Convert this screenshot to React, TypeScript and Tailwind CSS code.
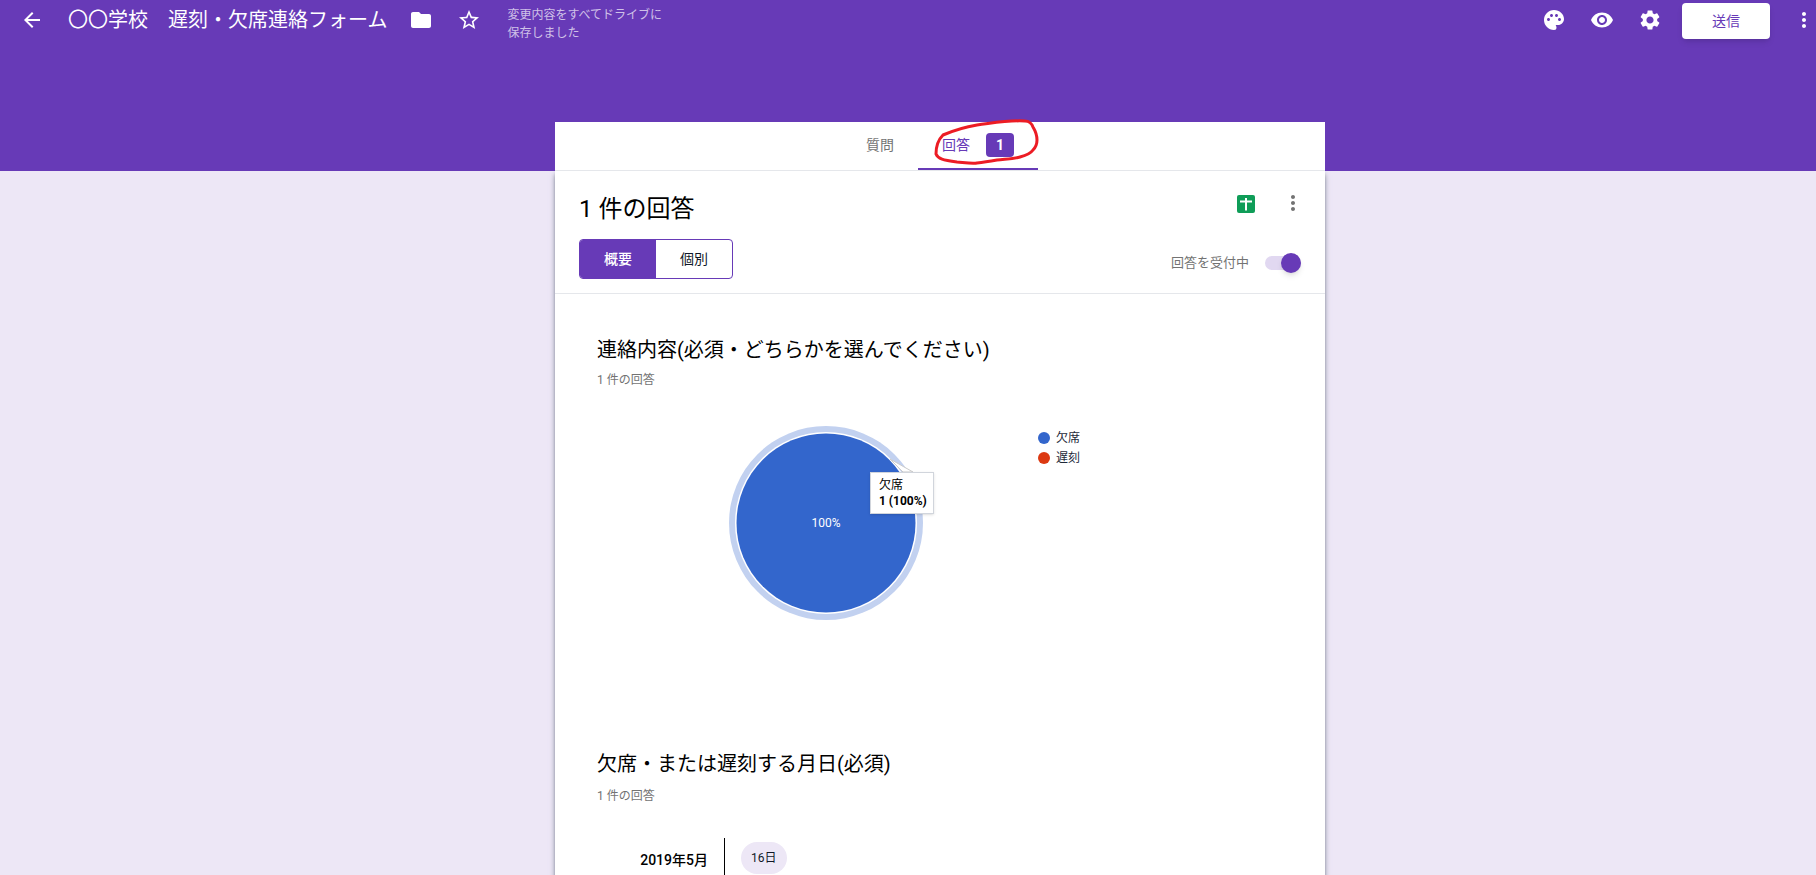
import { MdArrowBack, MdFolder, MdMoreVert, MdPalette, MdRemoveRedEye, MdSettings, MdStarBorder } from "react-icons/md"

const font = { fontFamily: '"Roboto", "Noto Sans CJK JP", sans-serif' }

function TopBar() {
    return (
        <div className="flex h-10 items-center pl-5 text-white">
            <MdArrowBack size={24} />
            <h1 className="ml-6 text-xl whitespace-nowrap">〇〇学校　遅刻・欠席連絡フォーム</h1>
            <MdFolder size={24} className="ml-5.5" />
            <MdStarBorder size={24} className="ml-6" />
            <p className="ml-6.5 w-40 pt-2 text-xs leading-4.5 text-white/70">変更内容をすべてドライブに保存しました</p>
            <div className="ml-auto flex items-center gap-6">
                <MdPalette size={24} />
                <MdRemoveRedEye size={24} />
                <MdSettings size={24} />
            </div>
            <button className="mt-0.5 ml-5 h-9 w-22 rounded bg-white text-sm text-[#673ab7] shadow-md">送信</button>
            <MdMoreVert size={24} className="ml-5.5" />
        </div>
    )
}

function Tabs() {
    return (
        <div className="relative mb-px ml-[555px] flex h-12 w-[770px] justify-center bg-white text-sm">
            <div className="flex items-center border-b-2 border-transparent px-6 text-neutral-500">質問</div>
            <div className="flex items-center border-b-2 border-[#673ab7] px-6 text-[#673ab7]">
                回答
                <span className="ml-4 flex h-6 w-7 items-center justify-center rounded bg-[#673ab7] font-bold text-white">1</span>
            </div>
            <svg viewBox="0 0 770 48" className="absolute inset-0 h-full w-full overflow-visible" fill="none">
                <path
                    d="M470 -1 C455 -2 445 0 422 3 C410 5 402 7 388 13 C383 18 381 26 381 32 C383 37 388 38 402 40 C412 41 418 42 422 41 C430 40 436 39 442 38 C450 37 458 37 465 35 C472 33 476 31 478 28 C481 25 482 22 482 18 C482 13 481 10 478 5 C477 2 474 -1 470 -1"
                    stroke="#ec1c24"
                    strokeWidth="3"
                    strokeLinecap="round"
                />
            </svg>
        </div>
    )
}

function SheetIcon() {
    return (
        <svg width="18" height="18" viewBox="0 0 18 18">
            <rect width="18" height="18" rx="2" fill="#0f9d58" />
            <path d="M8 3h2v2.500h5V7.500h-5V15.500H8V7.500H3V5.500h5z" fill="#fff" />
        </svg>
    )
}

function SummaryHeader() {
    return (
        <div className="border-b border-gray-200 px-6 pt-5 pb-3.5">
            <div className="flex justify-between">
                <h2 className="mt-0.5 text-2xl text-black">1 件の回答</h2>
                <div className="flex gap-6.5 text-neutral-500">
                    <div className="pt-1"><SheetIcon /></div>
                    <MdMoreVert size={24} className="-mr-1" />
                </div>
            </div>
            <div className="mt-3.5 flex justify-between">
                <div className="flex h-10 overflow-hidden rounded border border-[#673ab7] text-sm">
                    <div className="flex items-center bg-[#673ab7] px-6 font-medium text-white">概要</div>
                    <div className="flex items-center px-6 text-gray-900">個別</div>
                </div>
                <div className="flex items-center gap-4 pt-2">
                    <span className="text-[13px] text-neutral-500">回答を受付中</span>
                    <div className="relative h-3.5 w-9 rounded-full bg-[#e1d8f1]">
                        <div className="absolute top-1/2 right-0 h-5 w-5 -translate-y-1/2 rounded-full bg-[#673ab7] shadow-md" />
                    </div>
                </div>
            </div>
        </div>
    )
}

function PieChart() {
    return (
        <div className="relative ml-32 h-52 w-52">
            <svg viewBox="0 0 208 208" className="h-52 w-52">
                <circle cx="103" cy="103" r="97" fill="#c2d1f0" />
                <circle cx="103" cy="103" r="91" fill="#fff" />
                <circle cx="103" cy="103" r="89.500" fill="#3366cc" />
                <text x="103" y="107" textAnchor="middle" fill="#fff" fontSize="12">100%</text>
                <path d="M167 39L180 52H190Z" fill="#fff" stroke="#ccc" />
            </svg>
            <div className="absolute top-[52px] left-[147px] w-16 border border-gray-300 bg-white px-2 py-1 text-xs whitespace-nowrap text-black shadow">
                <div>欠席</div>
                <div className="font-bold">1 (100%)</div>
            </div>
        </div>
    )
}

function Legend() {
    return (
        <div className="mt-2 ml-[107px] text-xs text-gray-800">
            <div className="flex h-5 items-center gap-1.5">
                <span className="h-3 w-3 rounded-full bg-[#3366cc]" />
                欠席
            </div>
            <div className="flex h-5 items-center gap-1.5">
                <span className="h-3 w-3 rounded-full bg-[#dc3912]" />
                遅刻
            </div>
        </div>
    )
}

export default function App() {
    return (
        <div className="h-screen overflow-hidden bg-[#ede7f6]" style={font}>
            <div className="flex h-[171px] flex-col justify-between bg-[#673ab7]">
                <TopBar />
                <Tabs />
            </div>
            <div className="-mt-px ml-[555px] w-[770px] border-t border-gray-200 bg-white shadow-md shadow-gray-500">
                <SummaryHeader />
                <section className="px-10 pt-10.5 pb-20">
                    <h3 className="ml-0.5 text-xl text-black">連絡内容(必須・どちらかを選んでください)</h3>
                    <p className="mt-2 ml-0.5 text-xs text-neutral-500">1 件の回答</p>
                    <div className="mt-8 mb-0.5 flex">
                        <PieChart />
                        <Legend />
                    </div>
                </section>
                <section className="px-10 pt-10">
                    <h3 className="ml-0.5 text-xl text-black">欠席・または遅刻する月日(必須)</h3>
                    <p className="mt-2.5 ml-0.5 text-xs text-neutral-500">1 件の回答</p>
                    <div className="mt-8.5 ml-0.5 flex h-12">
                        <div className="w-32 border-r border-black pt-3 pr-4 text-right text-sm font-medium text-black">2019年5月</div>
                        <div className="ml-4 pt-1">
                            <span className="flex h-8 items-center rounded-2xl bg-[#ede7f6] px-2.5 text-xs text-gray-900">16日</span>
                        </div>
                    </div>
                </section>
            </div>
        </div>
    )
}
